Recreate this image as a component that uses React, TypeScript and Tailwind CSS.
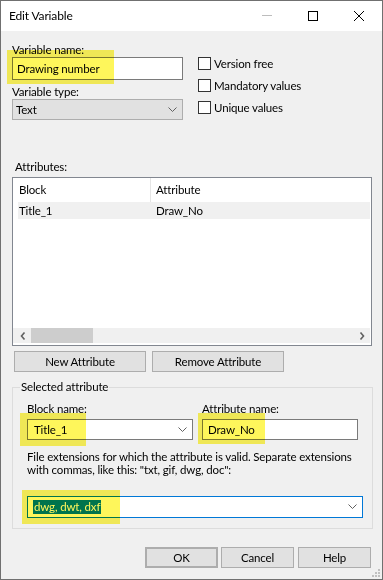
import React from "react";

const font = { fontFamily: 'Lato, "Noto Sans", "Liberation Sans", sans-serif' };

const Chevron = () => (
  <svg width="9" height="6" viewBox="0 0 9 6" className="shrink-0">
    <polyline points="0.5,0.5 4.5,4.5 8.5,0.5" fill="none" stroke="#606060" strokeWidth="1" />
  </svg>
);

const Check = ({ label }: { label: string }) => (
  <div className="flex items-center h-[13px] gap-[3px]">
    <div className="w-[13px] h-[13px] border border-[#333] bg-white shrink-0" />
    <span className="leading-[13px]">{label}</span>
  </div>
);

const Button = ({ label, className = "" }: { label: string; className?: string }) => (
  <div
    className={
      "h-[21px] flex items-center justify-center bg-[#e1e1e1] border border-[#adadad] " + className
    }
  >
    {label}
  </div>
);

const Highlight = ({ x, y, w, h }: { x: number; y: number; w: number; h: number }) => (
  <div
    className="absolute bg-[#fef65b] mix-blend-multiply pointer-events-none"
    style={{ left: x, top: y, width: w, height: h }}
  />
);

export default function App() {
  return (
    <div
      style={font}
      className="relative w-[383px] h-[580px] border border-[#707070] bg-[#f0f0f0] text-[11.5px] tracking-[-0.15px] text-black overflow-hidden flex flex-col"
    >
      {/* title bar */}
      <div className="h-[30px] bg-white flex items-center shrink-0">
        <span className="ml-[8px] text-[12px]">Edit Variable</span>
        <div className="ml-auto flex items-center h-full">
          <div className="w-[46px] h-full flex items-center justify-center">
            <div className="w-[10px] h-px bg-[#bdbdbd] mt-[-1px]" />
          </div>
          <div className="w-[46px] h-full flex items-center justify-center">
            <div className="w-[10px] h-[10px] border border-black mt-[-1px]" />
          </div>
          <div className="w-[46px] h-full flex items-center justify-center">
            <svg width="10" height="10" viewBox="0 0 10 10" className="mt-[-1px]">
              <path d="M0 0 L10 10 M10 0 L0 10" stroke="#000" strokeWidth="1" />
            </svg>
          </div>
        </div>
      </div>

      {/* body */}
      <div className="flex-1 flex flex-col px-[11px]">
        {/* top section */}
        <div className="flex mt-[11px]">
          <div className="w-[171px] flex flex-col">
            <div className="h-[15px] leading-[15px]">Variable name:</div>
            <div className="h-[23px] bg-white border border-[#7a7a7a] flex items-center pl-[4px]">
              Drawing number
            </div>
            <div className="h-[14px] leading-[14px] mt-[5px]">Variable type:</div>
            <div className="h-[21px] bg-[#e1e1e1] border border-[#adadad] flex items-center pl-[3px] pr-[5px]">
              <span>Text</span>
              <span className="ml-auto">
                <Chevron />
              </span>
            </div>
          </div>
          <div className="ml-[15px] flex flex-col gap-[9px] pt-[15px]">
            <Check label="Version free" />
            <Check label="Mandatory values" />
            <Check label="Unique values" />
          </div>
        </div>

        {/* attributes */}
        <div className="h-[15px] leading-[15px] mt-[39px] ml-[3px]">Attributes:</div>
        <div className="mt-[3px] w-[360px] h-[169px] bg-white border border-[#828790] flex flex-col pl-[5px]">
          <div className="h-[24px] flex items-center">
            <div className="w-[133px] h-full flex items-center pl-[1px] border-r border-[#e5e5e5]">Block</div>
            <div className="pl-[5px]">Attribute</div>
          </div>
          <div className="h-[17px] bg-[#f0f0f0] flex items-center mr-[1px]">
            <div className="w-[134px] pl-[1px]">Title_1</div>
            <div className="pl-[4px]">Draw_No</div>
          </div>
          <div className="flex-1" />
          <div className="h-[15px] mb-[2px] bg-[#f0f0f0] flex items-center ml-[-5px] mr-[1px] pl-[1px]">
            <div className="w-[17px] flex items-center justify-center">
              <svg width="6" height="8" viewBox="0 0 6 8">
                <polyline points="4.5,0.5 1.5,4 4.5,7.5" fill="none" stroke="#606060" strokeWidth="1.6" />
              </svg>
            </div>
            <div className="w-[62px] h-[15px] bg-[#cdcdcd]" />
            <div className="ml-auto w-[17px] flex items-center justify-center">
              <svg width="6" height="8" viewBox="0 0 6 8">
                <polyline points="1.5,0.5 4.5,4 1.5,7.5" fill="none" stroke="#606060" strokeWidth="1.6" />
              </svg>
            </div>
          </div>
        </div>
        <div className="flex mt-[5px] ml-[2px] gap-[6px]">
          <Button label="New Attribute" className="w-[132px]" />
          <Button label="Remove Attribute" className="w-[132px]" />
        </div>

        {/* selected attribute group */}
        <div className="mt-[15px] w-[361px] h-[142px] border border-[#dcdcdc] flex flex-col px-[14px] relative">
          <div className="absolute left-[7px] top-[-9px] px-[1px] bg-[#f0f0f0] leading-[16px]">
            Selected attribute
          </div>
          <div className="flex mt-[13px] gap-[9px]">
            <div className="w-[168px] flex flex-col">
              <div className="h-[15px] leading-[15px]">Block name:</div>
              <div className="mt-[3px] h-[21px] bg-white border border-[#7a7a7a] flex items-center pl-[6px] pr-[5px]">
                <span>Title_1</span>
                <span className="ml-auto">
                  <Chevron />
                </span>
              </div>
            </div>
            <div className="w-[158px] flex flex-col">
              <div className="h-[15px] leading-[15px]">Attribute name:</div>
              <div className="mt-[3px] h-[21px] bg-white border border-[#7a7a7a] flex items-center pl-[5px]">
                Draw_No
              </div>
            </div>
          </div>
          <div className="mt-[10px] leading-[13px]">
            File extensions for which the attribute is valid. Separate extensions with commas, like this: "txt, gif, dwg, doc":
          </div>
          <div className="mt-[20px] h-[22px] w-[336px] bg-white border border-[#0078d7] flex items-center pl-[5px] pr-[5px]">
            <span className="bg-[#0078d7] text-white leading-[14px] px-[1px]">dwg, dwt, dxf</span>
            <span className="ml-auto">
              <Chevron />
            </span>
          </div>
        </div>

        {/* footer */}
        <div className="flex mt-[18px] ml-[133px]">
          <Button label="OK" className="w-[73px] border-2 border-[#0078d7]" />
          <Button label="Cancel" className="w-[73px] ml-[3px]" />
          <Button label="Help" className="w-[73px] ml-[4px]" />
        </div>
      </div>

      {/* resize grip */}
      <svg width="8" height="8" viewBox="0 0 8 8" className="absolute right-[2px] bottom-[2px]">
        <rect x="6" y="0" width="2" height="2" fill="#c0c0c0" />
        <rect x="3" y="3" width="2" height="2" fill="#c0c0c0" />
        <rect x="6" y="3" width="2" height="2" fill="#c0c0c0" />
        <rect x="0" y="6" width="2" height="2" fill="#c0c0c0" />
        <rect x="3" y="6" width="2" height="2" fill="#c0c0c0" />
        <rect x="6" y="6" width="2" height="2" fill="#c0c0c0" />
      </svg>

      {/* highlighter marks */}
      <Highlight x={6} y={49} w={107} h={34} />
      <Highlight x={19} y={412} w={66} h={33} />
      <Highlight x={197} y={412} w={67} h={31} />
      <Highlight x={21} y={489} w={98} h={34} />
    </div>
  );
}
